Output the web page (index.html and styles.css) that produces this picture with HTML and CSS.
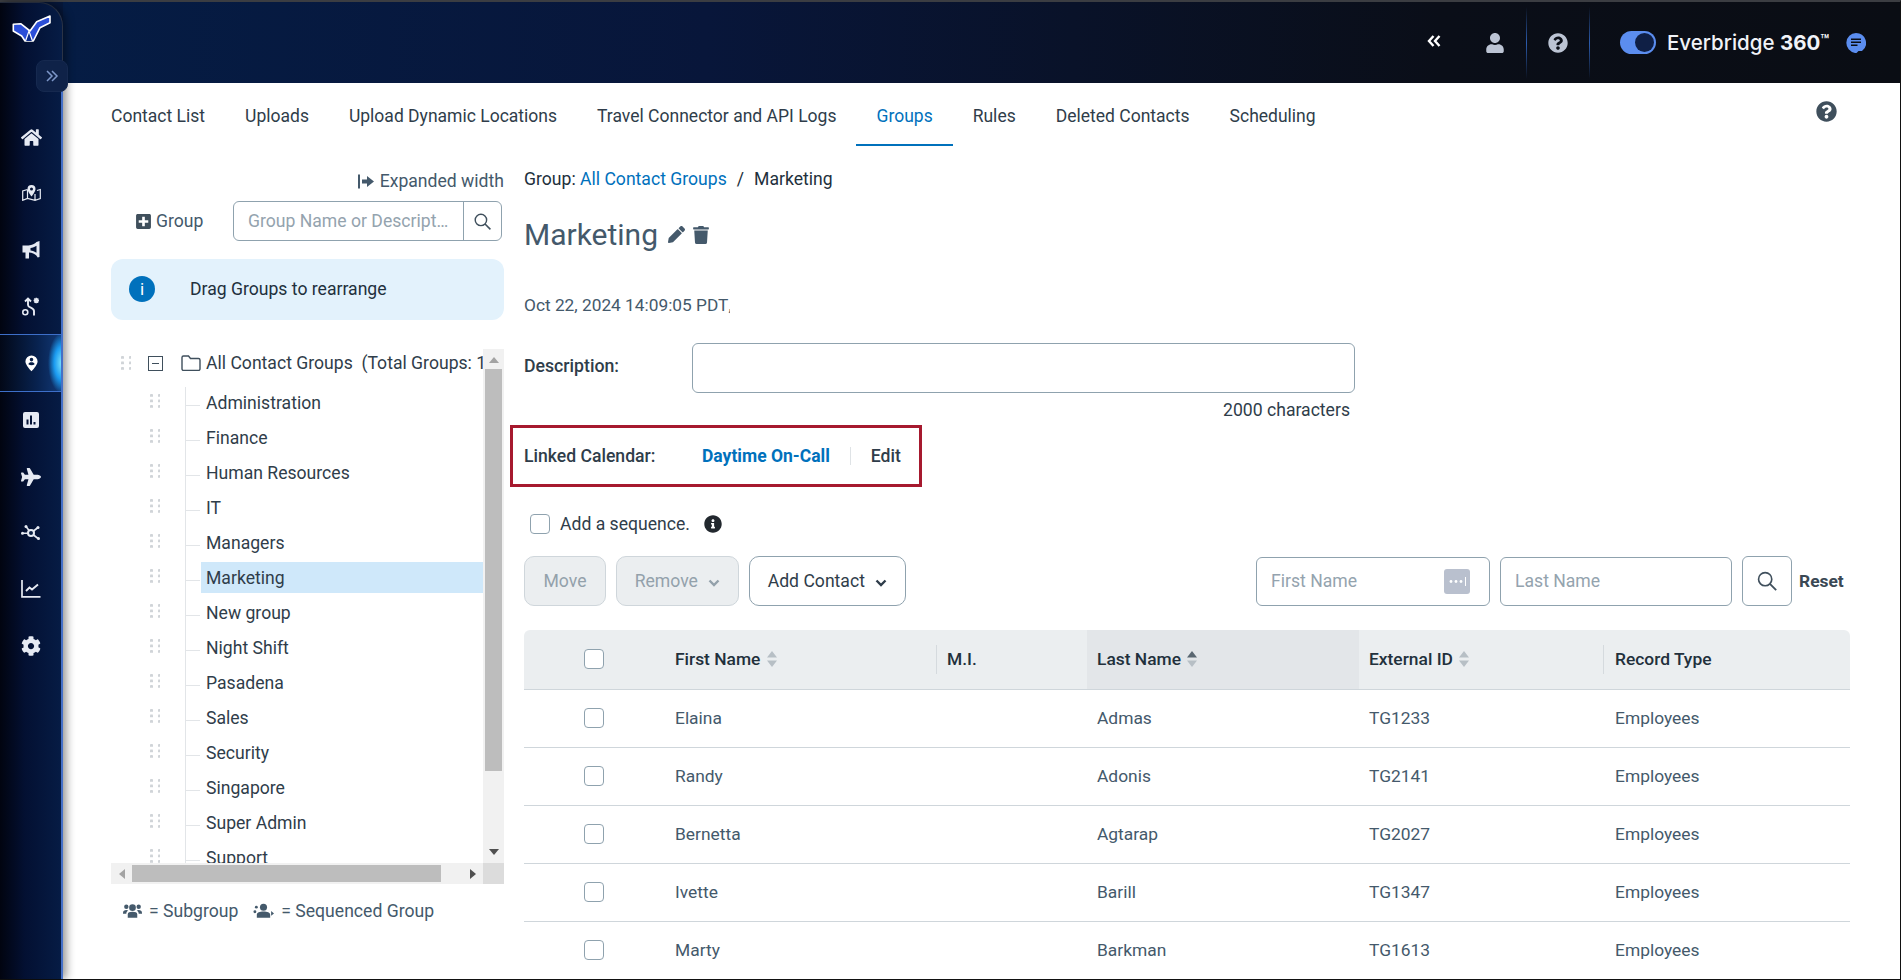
FILE: index.html
```html
<!DOCTYPE html>
<html lang="en">
<head>
    <meta charset="UTF-8">
    <title>Groups - Everbridge 360</title>
    <link rel="stylesheet" href="styles.css">
</head>
<body>
    <!-- Shared font awesome style glyphs -->
    <svg class="sprite" width="0" height="0">
        <symbol id="i-question" viewBox="0 0 512 512"><path d="M504 256c0 136.997-111.043 248-248 248S8 392.997 8 256C8 119.083 119.043 8 256 8s248 111.083 248 248zM262.655 90c-54.497 0-89.255 22.957-116.549 63.758-3.536 5.286-2.353 12.415 2.715 16.258l34.699 26.31c5.205 3.947 12.621 3.008 16.665-2.122 17.864-22.658 30.113-35.797 57.303-35.797 20.429 0 45.698 13.148 45.698 32.958 0 14.976-12.363 22.667-32.534 33.976C247.128 238.528 216 254.941 216 296v4c0 6.627 5.373 12 12 12h56c6.627 0 12-5.373 12-12v-1.333c0-28.462 83.186-29.647 83.186-106.667 0-58.002-60.165-102-116.531-102zM256 338c-25.365 0-46 20.635-46 46 0 25.364 20.635 46 46 46s46-20.636 46-46c0-25.365-20.635-46-46-46z"/></symbol>
        <symbol id="i-info" viewBox="0 0 512 512"><path d="M256 8C119.043 8 8 119.083 8 256c0 136.997 111.043 248 248 248s248-111.003 248-248C504 119.083 392.957 8 256 8zm0 110c23.196 0 42 18.804 42 42s-18.804 42-42 42-42-18.804-42-42 18.804-42 42-42zm56 254c0 6.627-5.373 12-12 12h-88c-6.627 0-12-5.373-12-12v-24c0-6.627 5.373-12 12-12h12v-64h-12c-6.627 0-12-5.373-12-12v-24c0-6.627 5.373-12 12-12h64c6.627 0 12 5.373 12 12v100h12c6.627 0 12 5.373 12 12v24z"/></symbol>
        <symbol id="i-search" viewBox="0 0 24 24"><circle cx="10" cy="10" r="7.2" fill="none" stroke="currentColor" stroke-width="1.8"/><path d="M15.2 15.2L22 22" fill="none" stroke="currentColor" stroke-width="2"/></symbol>
        <symbol id="i-caret" viewBox="0 0 12 8"><path d="M1.5 1.5L6 6l4.5-4.5" fill="none" stroke="currentColor" stroke-width="2.4"/></symbol>
        <symbol id="i-sort" viewBox="0 0 10 16"><path class="sort-up" d="M5 0l5 6.5H0z"/><path class="sort-down" d="M5 16l5-6.5H0z"/></symbol>
    </svg>

    <div class="app">
        <!-- Side navigation -->
        <aside class="sidebar">
            <svg class="logo" viewBox="-1 -1 39 27" width="39" height="27">
                <path d="M.3 8.300L7.700 7.700 17 15 23.700 5.700 37 0V6.700L27 11.700 20.300 25H12L8.700 20 .3 15z" fill="#2c4fd8" stroke="#fff" stroke-width="1.600" stroke-linejoin="round"/>
                <path d="M12.500 25L16 15l3.500 10" fill="#0b2a8a" stroke="#fff" stroke-width="1.200"/>
            </svg>
            <button class="expand-btn">
                <svg viewBox="0 0 14 14" width="14" height="14"><path d="M2 2l5 5-5 5M7 2l5 5-5 5" fill="none" stroke="#7d97c9" stroke-width="1.5"/></svg>
            </button>
            <nav class="side-icons">
                <a class="side-item"><svg viewBox="0 0 576 512" width="21" height="19"><path d="M280.370 148.260L96 300.110V464a16 16 0 0 0 16 16l112.060-.29a16 16 0 0 0 15.920-16V368a16 16 0 0 1 16-16h64a16 16 0 0 1 16 16v95.640a16 16 0 0 0 16 16.050L464 480a16 16 0 0 0 16-16V300L295.670 148.260a12.190 12.190 0 0 0-15.300 0zM571.600 251.470L488 182.560V44.050a12 12 0 0 0-12-12h-56a12 12 0 0 0-12 12v72.610L318.470 43a48 48 0 0 0-61 0L4.340 251.470a12 12 0 0 0-1.600 16.900l25.500 31A12 12 0 0 0 45.150 301l235.220-193.740a12.190 12.190 0 0 1 15.300 0L530.900 301a12 12 0 0 0 16.900-1.600l25.500-31a12 12 0 0 0-1.700-16.930z"/></svg></a>
                <a class="side-item"><svg viewBox="0 0 19 16" width="19" height="16"><path d="M5.500 4.500L.7 6v9.300l4.800-1.800 7.500 1.800 5.300-1.800V4.500L15 5.500M5.500 4.500v9M13 9v6.300" fill="none" stroke="#e6eaf3" stroke-width="1.2"/><path fill-rule="evenodd" d="M9.500 0a4 4 0 0 1 4 4c0 2.400-4 7.500-4 7.500S5.500 6.400 5.500 4a4 4 0 0 1 4-4zm0 2.500a1.500 1.500 0 1 0 0 3 1.500 1.500 0 0 0 0-3z"/></svg></a>
                <a class="side-item"><svg viewBox="0 0 20 20" width="20" height="20"><path fill-rule="evenodd" d="M18.500 1v16l-1.800.6-1.200-1.900c-1.600-1.900-4.500-3-7.500-3.200V18.500H4.500v-6H1.500V5.500h6C11 5.300 14 3.700 15.500 2zM15.500 5.800C13.800 7 11.500 7.800 9.500 8v2.500c2 .3 4.300 1.100 6 2.300z"/></svg></a>
                <a class="side-item"><svg viewBox="0 0 18 19" width="18" height="19"><circle cx="3.300" cy="15.300" r="2.500" fill="none" stroke="#e6eaf3" stroke-width="1.6"/><path d="M3 4.500L6 1.500l3 3M6 2v6c0 3 6 2.500 6 6v4.500" fill="none" stroke="#e6eaf3" stroke-width="1.9"/><path d="M12.300 1.500l4 4M16.300 1.500l-4 4M14.300 .8v5.400M11.600 3.500H17" stroke="#e6eaf3" stroke-width="1.5"/></svg></a>
                <a class="side-item active"><svg viewBox="0 0 16 20" width="13" height="17"><path fill-rule="evenodd" d="M8 0a7.500 7.500 0 0 1 7.500 7.500C15.500 12 8 19.500 8 19.500S.5 12 .5 7.500A7.500 7.500 0 0 1 8 0zM8 3a2.200 2.200 0 1 0 0 4.400A2.200 2.200 0 0 0 8 3zM4.200 10.800c1 .8 2.400 1.200 3.800 1.200s2.800-.4 3.800-1.200C11.500 9.300 10 8.500 8 8.500s-3.500.8-3.800 2.300z"/></svg></a>
                <a class="side-item"><svg viewBox="0 0 16 16" width="16" height="16"><path fill-rule="evenodd" d="M2 0h12a2 2 0 0 1 2 2v12a2 2 0 0 1-2 2H2a2 2 0 0 1-2-2V2a2 2 0 0 1 2-2zm5 3.500v9h2v-9zM3.500 7.500v5h2v-5zm7 2.500v2.500h2V10z"/></svg></a>
                <a class="side-item"><svg viewBox="0 0 576 512" width="20" height="18"><path d="M480 192H365.710L260.610 8.060A16.014 16.014 0 0 0 246.710 0h-65.500c-10.630 0-18.300 10.170-15.380 20.390L214.860 192H112l-43.200-57.600c-3.020-4.030-7.770-6.400-12.800-6.400H16.010C5.600 128-2.040 137.780.49 147.880L32 256 .49 364.120C-2.040 374.220 5.600 384 16.010 384H56c5.040 0 9.780-2.370 12.800-6.400L112 320h102.860l-49.030 171.600c-2.920 10.220 4.750 20.400 15.380 20.400h65.500c5.740 0 11.040-3.080 13.890-8.060L365.710 320H480c35.350 0 96-28.650 96-64s-60.650-64-96-64z"/></svg></a>
                <a class="side-item"><svg viewBox="0 0 20 16" width="20" height="16"><path d="M10 8L5 1.500M10 8l7-5.500M10 8l-9 .3M10 8l7 5.500" fill="none" stroke="#e6eaf3" stroke-width="1.6"/><circle cx="10" cy="8" r="3" fill="#0a1f44" stroke="#e6eaf3" stroke-width="2"/><circle cx="5" cy="1.500" r="1.500"/><circle cx="17" cy="2.500" r="1.500"/><circle cx="1.500" cy="8.300" r="1.500"/><circle cx="17.500" cy="13.500" r="1.500"/></svg></a>
                <a class="side-item"><svg viewBox="0 0 20 18" width="20" height="18"><path d="M1 0v16.800h18.500" fill="none" stroke="#e6eaf3" stroke-width="1.7"/><path d="M5 11l3.500-3.500 2.500 2 6-5" fill="none" stroke="#e6eaf3" stroke-width="1.9"/></svg></a>
                <a class="side-item"><svg viewBox="0 0 512 512" width="20" height="20"><path d="M487.400 315.700l-42.600-24.600c4.300-23.200 4.300-47 0-70.200l42.600-24.600c4.900-2.800 7.100-8.600 5.500-14-11.100-35.600-30-67.800-54.700-94.600-3.800-4.100-10-5.100-14.800-2.300L380.800 110c-17.900-15.400-38.500-27.300-60.800-35.100V25.800c0-5.600-3.900-10.500-9.400-11.700-36.700-8.200-74.300-7.800-109.200 0-5.500 1.200-9.400 6.100-9.400 11.700V75c-22.200 7.900-42.800 19.800-60.800 35.100L88.700 85.500c-4.900-2.800-11-1.900-14.800 2.300-24.700 26.700-43.600 58.900-54.700 94.600-1.700 5.400.6 11.200 5.500 14L67.300 221c-4.300 23.200-4.300 47 0 70.200l-42.600 24.600c-4.900 2.800-7.100 8.600-5.500 14 11.100 35.600 30 67.800 54.700 94.600 3.800 4.100 10 5.100 14.800 2.300l42.600-24.600c17.900 15.400 38.500 27.300 60.800 35.100v49.200c0 5.600 3.900 10.500 9.400 11.700 36.700 8.200 74.300 7.800 109.200 0 5.500-1.200 9.400-6.100 9.400-11.700v-49.200c22.200-7.900 42.800-19.800 60.800-35.100l42.600 24.600c4.900 2.800 11 1.900 14.800-2.300 24.700-26.700 43.600-58.900 54.700-94.600 1.500-5.500-.7-11.300-5.600-14.100zM256 336c-44.100 0-80-35.900-80-80s35.900-80 80-80 80 35.900 80 80-35.900 80-80 80z"/></svg></a>
            </nav>
        </aside>

        <div class="main">
            <!-- Top bar -->
            <header class="topbar">
                <svg class="top-collapse" viewBox="0 0 14 12" width="14" height="12"><path d="M6.500 1L2 6l4.500 5M12.500 1L8 6l4.500 5" fill="none" stroke="#fff" stroke-width="2.4"/></svg>
                <svg class="top-user" viewBox="0 0 448 512" width="18" height="20"><path d="M224 256c70.700 0 128-57.300 128-128S294.700 0 224 0 96 57.300 96 128s57.300 128 128 128zm89.600 32h-16.700c-22.200 10.200-46.900 16-72.900 16s-50.600-5.800-72.900-16h-16.700C60.200 288 0 348.200 0 422.400V464c0 26.500 21.500 48 48 48h352c26.500 0 48-21.500 48-48v-41.600c0-74.200-60.200-134.400-134.400-134.400z"/></svg>
                <span class="top-divider"></span>
                <svg class="top-help"><use href="#i-question"/></svg>
                <span class="top-divider"></span>
                <span class="toggle"><span class="toggle-knob"></span></span>
                <span class="brand">Everbridge <b>360</b><sup>™</sup></span>
                <svg class="top-chat" viewBox="0 0 20 20" width="20" height="20"><path fill-rule="evenodd" d="M10 0a10 10 0 0 1 6 18h-3.500L10.500 20 9 19.900A10 10 0 0 1 10 0zM5 5.500V7h10V5.500zM5 8.500V10h10V8.500zM5 11.500V13h6.500v-1.500z"/></svg>
            </header>

            <div class="content">
                <!-- Tabs -->
                <div class="tabs-row">
                    <ul class="tabs">
                        <li><a>Contact List</a></li>
                        <li><a>Uploads</a></li>
                        <li><a>Upload Dynamic Locations</a></li>
                        <li><a>Travel Connector and API Logs</a></li>
                        <li class="selected"><a>Groups</a></li>
                        <li><a>Rules</a></li>
                        <li><a>Deleted Contacts</a></li>
                        <li><a>Scheduling</a></li>
                    </ul>
                    <svg class="page-help"><use href="#i-question"/></svg>
                </div>

                <div class="columns">
                    <!-- Group tree -->
                    <section class="left-panel">
                        <div class="expand-width">
                            <svg viewBox="0 0 18 14" width="18" height="15"><path d="M1 0h2v14H1zM5 5h5V1.500L17 7l-7 5.500V9H5z"/></svg>
                            Expanded width
                        </div>
                        <div class="group-bar">
                            <a class="add-group">
                                <svg viewBox="0 0 448 512" width="15" height="17"><path d="M400 32H48C21.500 32 0 53.500 0 80v352c0 26.500 21.500 48 48 48h352c26.500 0 48-21.500 48-48V80c0-26.500-21.500-48-48-48zm-32 252c0 6.600-5.400 12-12 12h-92v92c0 6.600-5.400 12-12 12h-56c-6.600 0-12-5.400-12-12v-92H92c-6.600 0-12-5.400-12-12v-56c0-6.600 5.400-12 12-12h92v-92c0-6.600 5.400-12 12-12h56c6.600 0 12 5.400 12 12v92h92c6.600 0 12 5.400 12 12v56z"/></svg>
                                Group
                            </a>
                            <div class="group-search">
                                <input type="text" placeholder="Group Name or Description">
                                <button><svg width="19" height="19"><use href="#i-search"/></svg></button>
                            </div>
                        </div>
                        <div class="drag-note">
                            <span class="note-icon">i</span>
                            Drag Groups to rearrange
                        </div>

                        <div class="tree-box">
                            <div class="tree-view">
                                <div class="tree-root">
                                    <span class="dots"></span>
                                    <span class="tree-minus"></span>
                                    <svg class="folder" viewBox="0 0 20 16" width="20" height="16"><path d="M1 14V2.500A1.500 1.500 0 0 1 2.500 1h5L9.500 3.500h8A1.500 1.500 0 0 1 19 5v9a1.500 1.500 0 0 1-1.500 1.500h-15A1.500 1.500 0 0 1 1 14z" fill="none" stroke="#3f4f5c" stroke-width="1.4"/></svg>
                                    <span class="tree-label">All Contact Groups&nbsp; (Total Groups: 14)</span>
                                </div>
                                <ul class="tree-list">
                                    <li><span class="dots"></span><span class="guide"></span><span class="tree-label">Administration</span></li>
                                    <li><span class="dots"></span><span class="guide"></span><span class="tree-label">Finance</span></li>
                                    <li><span class="dots"></span><span class="guide"></span><span class="tree-label">Human Resources</span></li>
                                    <li><span class="dots"></span><span class="guide"></span><span class="tree-label">IT</span></li>
                                    <li><span class="dots"></span><span class="guide"></span><span class="tree-label">Managers</span></li>
                                    <li class="current"><span class="dots"></span><span class="guide"></span><span class="tree-label">Marketing</span></li>
                                    <li><span class="dots"></span><span class="guide"></span><span class="tree-label">New group</span></li>
                                    <li><span class="dots"></span><span class="guide"></span><span class="tree-label">Night Shift</span></li>
                                    <li><span class="dots"></span><span class="guide"></span><span class="tree-label">Pasadena</span></li>
                                    <li><span class="dots"></span><span class="guide"></span><span class="tree-label">Sales</span></li>
                                    <li><span class="dots"></span><span class="guide"></span><span class="tree-label">Security</span></li>
                                    <li><span class="dots"></span><span class="guide"></span><span class="tree-label">Singapore</span></li>
                                    <li><span class="dots"></span><span class="guide"></span><span class="tree-label">Super Admin</span></li>
                                    <li><span class="dots"></span><span class="guide"></span><span class="tree-label">Support</span></li>
                                </ul>
                            </div>
                            <div class="vscroll">
                                <span class="arrow-up"></span>
                                <span class="vthumb"></span>
                                <span class="arrow-down"></span>
                            </div>
                            <div class="hscroll">
                                <span class="arrow-left"></span>
                                <span class="hthumb"></span>
                                <span class="arrow-right"></span>
                            </div>
                            <div class="scroll-corner"></div>
                        </div>

                        <div class="legend">
                            <svg viewBox="0 0 20 16" width="19" height="16"><circle cx="10" cy="4.500" r="3.500"/><circle cx="3.500" cy="3.500" r="2.300"/><circle cx="16.500" cy="3.500" r="2.300"/><path d="M5 15v-3.500C5 9.500 7 8.800 10 8.800s5 .7 5 2.700V15zM0 10c0-2 1.500-3 3.500-3l2 .6C4 8.500 3.500 9.800 3.500 11H0zM20 10c0-2-1.500-3-3.500-3l-2 .6C16 8.500 16.500 9.800 16.500 11H20z"/></svg>
                            <span class="legend-text">= Subgroup</span>
                            <svg viewBox="0 0 22 16" width="21" height="16"><circle cx="11" cy="4" r="3.700"/><circle cx="3.500" cy="4" r="1.500"/><circle cx="2" cy="8.800" r="1.500"/><path d="M4 15v-3c0-2.500 3-3.500 7-3.500s7 1 7 3.500v3zM19 8l3 2.500-3 2.500z"/></svg>
                            <span class="legend-text">= Sequenced Group</span>
                        </div>
                    </section>

                    <!-- Group detail -->
                    <section class="detail">
                        <div class="crumbs">Group: <a>All Contact Groups</a><span class="crumb-sep">/</span>Marketing</div>
                        <div class="title-row">
                            <h1>Marketing</h1>
                            <svg viewBox="0 0 512 512" width="17" height="17"><path d="M497.900 142.100l-46.100 46.100c-4.700 4.700-12.300 4.700-17 0l-111-111c-4.700-4.700-4.700-12.300 0-17l46.100-46.100c18.700-18.700 49.100-18.700 67.900 0l60.100 60.100c18.800 18.700 18.800 49.100 0 67.900zM284.200 99.800L21.600 362.400.4 483.900c-2.900 16.400 11.400 30.600 27.800 27.800l121.500-21.300 262.600-262.600c4.700-4.700 4.700-12.300 0-17l-111-111c-4.800-4.700-12.400-4.700-17.100 0z"/></svg>
                            <svg viewBox="0 0 448 512" width="16" height="18"><path d="M432 32H312l-9.400-18.700A24 24 0 0 0 281.100 0H166.800a23.720 23.720 0 0 0-21.400 13.300L136 32H16A16 16 0 0 0 0 48v32a16 16 0 0 0 16 16h416a16 16 0 0 0 16-16V48a16 16 0 0 0-16-16zM53.200 467a48 48 0 0 0 47.900 45h245.800a48 48 0 0 0 47.900-45L416 128H32z"/></svg>
                        </div>
                        <div class="stamp">Oct 22, 2024 14:09:05 PDT<span class="stamp-comma">,</span></div>
                        <div class="desc-row">
                            <label>Description:</label>
                            <textarea></textarea>
                        </div>
                        <div class="char-count">2000 characters</div>
                        <div class="linked-box">
                            <span class="linked-label">Linked Calendar:</span>
                            <a class="linked-name">Daytime On-Call</a>
                            <a class="linked-edit">Edit</a>
                        </div>
                        <div class="sequence-row">
                            <span class="check"></span>
                            <span>Add a sequence.</span>
                            <svg width="18" height="18"><use href="#i-info"/></svg>
                        </div>
                        <div class="toolbar">
                            <button class="btn btn-off btn-move">Move</button>
                            <button class="btn btn-off btn-remove">Remove <svg width="12" height="8"><use href="#i-caret"/></svg></button>
                            <button class="btn btn-add">Add Contact <svg width="12" height="8"><use href="#i-caret"/></svg></button>
                            <div class="filters">
                                <div class="field field-first">
                                    <input type="text" placeholder="First Name">
                                    <svg viewBox="0 0 26 25" width="26" height="25"><rect width="26" height="25" rx="3" fill="#b9c0ce"/><circle cx="7" cy="12.500" r="1.400" fill="#fff"/><circle cx="12" cy="12.500" r="1.400" fill="#fff"/><circle cx="17" cy="12.500" r="1.400" fill="#fff"/><path d="M21.500 8v9" stroke="#fff"/></svg>
                                </div>
                                <div class="field field-last"><input type="text" placeholder="Last Name"></div>
                                <button class="find-btn"><svg width="22" height="22"><use href="#i-search"/></svg></button>
                                <a class="reset">Reset</a>
                            </div>
                        </div>

                        <table class="contacts">
                            <colgroup>
                                <col class="c-check"><col class="c-first"><col class="c-mi"><col class="c-last"><col class="c-ext"><col class="c-type">
                            </colgroup>
                            <thead>
                                <tr>
                                    <th><span class="check"></span></th>
                                    <th>First Name <svg class="sort" width="10" height="16"><use href="#i-sort"/></svg></th>
                                    <th class="with-rule">M.I.</th>
                                    <th class="sorted">Last Name <svg class="sort sort-asc" width="10" height="16"><use href="#i-sort"/></svg></th>
                                    <th>External ID <svg class="sort" width="10" height="16"><use href="#i-sort"/></svg></th>
                                    <th class="with-rule">Record Type</th>
                                </tr>
                            </thead>
                            <tbody>
                                <tr><td><span class="check"></span></td><td>Elaina</td><td></td><td>Admas</td><td>TG1233</td><td>Employees</td></tr>
                                <tr><td><span class="check"></span></td><td>Randy</td><td></td><td>Adonis</td><td>TG2141</td><td>Employees</td></tr>
                                <tr><td><span class="check"></span></td><td>Bernetta</td><td></td><td>Agtarap</td><td>TG2027</td><td>Employees</td></tr>
                                <tr><td><span class="check"></span></td><td>Ivette</td><td></td><td>Barill</td><td>TG1347</td><td>Employees</td></tr>
                                <tr><td><span class="check"></span></td><td>Marty</td><td></td><td>Barkman</td><td>TG1613</td><td>Employees</td></tr>
                            </tbody>
                        </table>
                    </section>
                </div>
            </div>
        </div>
    </div>
</body>
</html>
```

FILE: styles.css
```css
/* Page */
* {
    box-sizing: border-box;
}

html, body {
    margin: 0;
    height: 100%;
    overflow: hidden;
}

body {
    font-family: Roboto, "Liberation Sans", sans-serif;
    font-size: 17.6px;
    color: #2f3d4a;
    background: #fff;
}

.sprite {
    display: block;
    height: 0;
}

button, input, textarea {
    font-family: inherit;
}

ul {
    list-style: none;
    margin: 0;
    padding: 0;
}

.app {
    display: flex;
    height: 980px;
    border-top: 2px solid #3b3d42;
    border-right: 1px solid #111;
    border-bottom: 1px solid #111;
    background: #06173a;
}

/* Side navigation */
.sidebar {
    position: relative;
    flex: 0 0 63px;
    border-top-right-radius: 24px;
    border-top: 1px solid #232a3a;
    border-right: 1px solid #2a3346;
    background: linear-gradient(90deg, #010410 0%, #031032 40%, #061c45 100%);
    box-shadow: 3px 0 10px rgba(0, 0, 0, 0.45);
    z-index: 2;
}

.sidebar::after {
    content: "";
    position: absolute;
    top: 88px;
    bottom: 0;
    right: -1px;
    width: 2px;
    background: #4470c8;
}

.logo {
    display: block;
    margin: 12px 0 0 12px;
}

.expand-btn {
    position: absolute;
    top: 57px;
    left: 36px;
    width: 32px;
    height: 32px;
    padding: 0;
    display: flex;
    align-items: center;
    justify-content: center;
    border: 1px solid #16294f;
    border-radius: 8px;
    background: #0f2248;
    z-index: 3;
}

.side-icons {
    display: flex;
    flex-direction: column;
    margin-top: 67px;
}

.side-item {
    display: flex;
    align-items: center;
    justify-content: center;
    height: 56.3px;
    fill: #e6eaf3;
}

.side-item.active {
    height: 58px;
    border-top: 1px solid #3d6fc9;
    border-bottom: 1px solid #3d6fc9;
    background:
        radial-gradient(ellipse 14px 30px at 100% 50%, #7fe6ff 0%, #1b9bf0 55%, rgba(20, 110, 220, 0) 100%),
        linear-gradient(90deg, #020817 0%, #08224f 60%, #123a78 100%);
    fill: #fff;
}

/* Top bar */
.main {
    flex: 1;
    min-width: 0;
    display: flex;
    flex-direction: column;
}

.topbar {
    flex: 0 0 81px;
    display: flex;
    align-items: center;
    background: linear-gradient(90deg, #051c44 0%, #08163a 35%, #0a0e18 75%, #0a0d14 100%);
}

.top-collapse {
    margin-left: 1364px;
    margin-top: -4px;
}

.top-user {
    margin-left: 45px;
    fill: #bcc4d4;
}

.top-divider {
    width: 1px;
    height: 72px;
    margin-left: 22px;
    background: linear-gradient(180deg, rgba(50, 100, 190, 0), #2c5cae 50%, rgba(50, 100, 190, 0));
}

.top-help {
    width: 20px;
    height: 20px;
    margin-left: 21px;
    margin-right: 10px;
    fill: #bcc4d4;
}

.top-help + .top-divider {
    margin-left: 11px;
}

.toggle {
    display: flex;
    align-items: center;
    justify-content: flex-end;
    width: 36px;
    height: 23px;
    margin-left: 30px;
    padding-right: 2px;
    border-radius: 12px;
    background: #5b8def;
}

.toggle-knob {
    width: 19px;
    height: 19px;
    border-radius: 50%;
    background: #0f1f45;
}

.brand {
    margin-left: 11px;
    font-family: Inter, sans-serif;
    font-size: 20.5px;
    font-weight: 500;
    color: #f1f3f8;
    white-space: nowrap;
}

.brand b {
    font-weight: 700;
}

.brand sup {
    font-size: 14px;
    font-weight: 700;
    vertical-align: 5px;
    line-height: 0;
}

.top-chat {
    margin-left: 17px;
    fill: #5b8def;
}

/* Content */
.content {
    flex: 1;
    min-height: 0;
    overflow: hidden;
    background: #fff;
}

.tabs-row {
    display: flex;
    justify-content: space-between;
    align-items: flex-start;
    height: 64px;
    padding: 0 63px 0 28px;
}

.tabs {
    display: flex;
    height: 63px;
    font-size: 17.52px;
}

.tabs li {
    padding: 23px 20px 0;
    white-space: nowrap;
}

.tabs li.selected {
    color: #0071bc;
    border-bottom: 2px solid #0071bc;
}

.page-help {
    width: 21px;
    height: 21px;
    margin-top: 18px;
    fill: #3f4f5c;
}

.columns {
    display: flex;
    align-items: flex-start;
    padding-left: 48px;
}

/* Left panel */
.left-panel {
    flex: 0 0 393px;
}

.expand-width {
    display: flex;
    align-items: center;
    justify-content: flex-end;
    gap: 5px;
    height: 22px;
    margin-top: 23px;
    color: #44596b;
    fill: #44596b;
}

.group-bar {
    display: flex;
    align-items: center;
    justify-content: space-between;
    margin-top: 9px;
    padding: 0 2px 0 25px;
}

.add-group {
    display: flex;
    align-items: center;
    gap: 5px;
    color: #44596b;
    fill: #3f4f5c;
}

.group-search {
    display: flex;
    width: 269px;
    height: 40px;
    border: 1px solid #8fa2ae;
    border-radius: 6px;
}

.group-search input {
    width: 229px;
    padding: 0 14px 0 14px;
    border: 0;
    outline: 0;
    background: transparent;
    font-size: 17.6px;
    text-overflow: ellipsis;
    border-radius: 6px 0 0 6px;
}

input::placeholder {
    color: #94a3ae;
    opacity: 1;
}

.group-search button {
    flex: 1;
    padding: 0;
    border: 0;
    border-left: 1px solid #8fa2ae;
    background: transparent;
    color: #3f4f5c;
    display: flex;
    align-items: center;
    justify-content: center;
}

.drag-note {
    display: flex;
    align-items: center;
    height: 61px;
    margin-top: 18px;
    padding: 0 0 2px 18px;
    border-radius: 12px;
    background: #e3f2fc;
    color: #22303c;
}

.note-icon {
    display: flex;
    align-items: center;
    justify-content: center;
    width: 26px;
    height: 26px;
    margin-right: 35px;
    border-radius: 50%;
    background: #0071bc;
    color: #fff;
    font-size: 17px;
}

/* Tree */
.tree-box {
    display: grid;
    grid-template-columns: 372px 21px;
    grid-template-rows: 514px 21px;
    margin-top: 29px;
}

.tree-view {
    overflow: hidden;
    white-space: nowrap;
}

.tree-root {
    display: flex;
    align-items: center;
    height: 38px;
    padding-bottom: 10px;
}

.tree-root .dots {
    margin-left: 10px;
}

.tree-minus {
    position: relative;
    flex: none;
    width: 15px;
    height: 15px;
    margin-left: 17px;
    border: 1px solid #3f4f5c;
}

.tree-minus::after {
    content: "";
    position: absolute;
    top: 6px;
    left: 3px;
    width: 7px;
    height: 1px;
    background: #3f4f5c;
}

.folder {
    margin-left: 18px;
    margin-right: 5px;
    flex: none;
}

.tree-label {
    color: #2f3d4a;
}

.dots {
    flex: none;
    width: 10px;
    height: 14px;
    background: radial-gradient(circle at 1.5px 1.5px, #d0d4d8 1.4px, transparent 1.6px);
    background-size: 8px 5.5px;
}

.tree-list li {
    display: flex;
    align-items: stretch;
    height: 35px;
}

.tree-list .dots {
    margin: 7px 25px 0 39px;
}

.guide {
    position: relative;
    flex: none;
    width: 16px;
    border-left: 1px solid #e2e5e8;
}

.guide::after {
    content: "";
    position: absolute;
    top: 50%;
    left: 0;
    width: 14px;
    height: 1px;
    background: #e2e5e8;
}

.tree-list .tree-label {
    flex: 1;
    margin-bottom: 4px;
    padding-left: 5px;
    display: flex;
    align-items: center;
}

.tree-list .current .tree-label {
    background: #cfe8fa;
}

/* Classic scrollbars */
.vscroll {
    display: flex;
    flex-direction: column;
    align-items: center;
    background: #f1f1f1;
}

.vthumb {
    flex: none;
    width: 17px;
    height: 402px;
    margin: 0 0 auto;
    background: #bdbdbd;
}

.arrow-up {
    flex: none;
    margin: 8px 0 6px;
    border: 5px solid transparent;
    border-top: 0;
    border-bottom: 6px solid #a3a3a3;
}

.arrow-down {
    flex: none;
    margin-bottom: 8px;
    border: 5px solid transparent;
    border-bottom: 0;
    border-top: 6px solid #505050;
}

.hscroll {
    display: flex;
    align-items: center;
    background: #f1f1f1;
}

.arrow-left {
    margin-left: 8px;
    border: 5px solid transparent;
    border-left: 0;
    border-right: 6px solid #a3a3a3;
}

.hthumb {
    width: 309px;
    height: 17px;
    margin-left: 7px;
    background: #bdbdbd;
}

.arrow-right {
    margin-left: 29px;
    border: 5px solid transparent;
    border-right: 0;
    border-left: 6px solid #505050;
}

.scroll-corner {
    background: #dcdcdc;
}

.legend {
    display: flex;
    align-items: center;
    margin-top: 17px;
    padding-left: 12px;
    color: #44596b;
    fill: #44596b;
}

.legend-text {
    margin: 0 15px 0 7px;
}

/* Group detail */
.detail {
    flex: 0 0 1326px;
    margin-left: 20px;
}

.crumbs {
    margin-top: 22px;
    height: 22px;
    color: #22303c;
}

.crumbs a {
    color: #0071bc;
}

.crumb-sep {
    margin: 0 10px;
}

.title-row {
    display: flex;
    align-items: center;
    margin-top: 26px;
    fill: #44596b;
}

.title-row h1 {
    margin: 0 10px 0 0;
    font-size: 30px;
    font-weight: 400;
    color: #44596b;
}

.title-row svg + svg {
    margin-left: 8px;
}

.stamp {
    margin-top: 43px;
    color: #44596b;
    font-size: 17.3px;
}

.stamp-comma {
    display: inline-block;
    width: 2px;
    overflow: clip;
}

.desc-row {
    display: flex;
    align-items: center;
    margin-top: 28px;
}

.desc-row label {
    flex: 0 0 168px;
    margin-top: -4px;
    font-size: 17.7px;
    font-weight: 500;
}

.desc-row textarea {
    width: 663px;
    height: 50px;
    border: 1px solid #8fa2ae;
    border-radius: 6px;
    resize: none;
}

.char-count {
    width: 826px;
    margin-top: 7px;
    text-align: right;
}

.linked-box {
    display: flex;
    align-items: center;
    width: 412px;
    height: 62px;
    margin: 5px 0 0 -14px;
    padding-left: 11px;
    border: 3px solid #a6192e;
}

.linked-label {
    flex: 0 0 178px;
    font-weight: 500;
}

.linked-name {
    padding-right: 20px;
    border-right: 1px solid #dfe3e6;
    color: #0071bc;
    font-size: 17.5px;
    font-weight: 700;
    line-height: 18px;
}

.linked-edit {
    margin-left: 20px;
    font-weight: 500;
}

.sequence-row {
    display: flex;
    align-items: center;
    gap: 10px;
    margin-top: 27px;
    padding-left: 6px;
    fill: #22282e;
}

.sequence-row svg {
    margin-left: 4px;
}

.check {
    display: block;
    width: 20px;
    height: 20px;
    border: 1px solid #8fa2ae;
    border-radius: 4px;
    background: #fff;
}

.toolbar {
    display: flex;
    align-items: center;
    gap: 10px;
    margin-top: 22px;
}

.btn {
    height: 50px;
    padding: 0;
    border: 1px solid #8fa2ae;
    border-radius: 10px;
    background: #fff;
    font-size: 17.6px;
    color: #2f3d4a;
}

.btn svg {
    margin-left: 6px;
}

.btn-off {
    border-color: #cfd6db;
    background: #ebeef0;
    color: #93a1ab;
}

.btn-move {
    width: 82px;
}

.btn-remove {
    width: 123px;
}

.btn-add {
    width: 157px;
}

.filters {
    display: flex;
    align-items: center;
    margin-left: 340px;
}

.field {
    display: flex;
    align-items: center;
    height: 49px;
    border: 1px solid #8fa2ae;
    border-radius: 6px;
    padding: 0 19px 0 14px;
}

.field input {
    flex: 1;
    min-width: 0;
    border: 0;
    outline: 0;
    padding: 0;
    font-size: 17.6px;
}

.field-first {
    width: 234px;
}

.field-last {
    width: 232px;
    margin-left: 10px;
}

.find-btn {
    display: flex;
    align-items: center;
    justify-content: center;
    width: 50px;
    height: 50px;
    margin-left: 10px;
    padding: 0;
    border: 1px solid #8fa2ae;
    border-radius: 6px;
    background: #fff;
    color: #3f4f5c;
}

.reset {
    margin-left: 7px;
    font-weight: 700;
    font-size: 17.4px;
    color: #3a4854;
}

/* Contacts table */
.contacts {
    width: 1326px;
    margin-top: 24px;
    border-collapse: collapse;
    table-layout: fixed;
    font-size: 17.4px;
}

.c-check {
    width: 143px;
}

.c-first {
    width: 269px;
}

.c-mi {
    width: 151px;
}

.c-last {
    width: 272px;
}

.c-ext {
    width: 244px;
}

.contacts th {
    height: 59px;
    padding: 0 0 0 8px;
    text-align: left;
    font-weight: 500;
    background: #ebeef0;
    border-bottom: 1px solid #cfd6db;
    color: #22303c;
}

.contacts th:first-child {
    border-top-left-radius: 6px;
}

.contacts th:last-child {
    border-top-right-radius: 6px;
}

.contacts th .check, .contacts td .check {
    margin-left: 52px;
}

.contacts th.sorted {
    background: #e3e6e9;
    padding-left: 10px;
}

.contacts th.with-rule {
    position: relative;
    padding-left: 11px;
}

.contacts th.with-rule::before {
    content: "";
    position: absolute;
    top: 15px;
    bottom: 15px;
    left: 0;
    width: 1px;
    background: #d5dade;
}

.contacts td {
    height: 58px;
    padding: 0 0 0 8px;
    border-bottom: 1px solid #cfd6db;
    color: #44596b;
}

.contacts td:nth-child(4) {
    padding-left: 10px;
}

.contacts td:nth-child(5), .contacts th:nth-child(5) {
    padding-left: 10px;
}

.contacts td:nth-child(6) {
    padding-left: 12px;
}

.contacts th:nth-child(6) {
    padding-left: 12px;
}

.sort {
    vertical-align: -2px;
    margin-left: 2px;
}

.sort-down {
    fill: #b7bfc5;
}

.sort-asc {
    --sort-up: #5a6771;
}

.sort-up {
    fill: var(--sort-up, #b7bfc5);
}
```
